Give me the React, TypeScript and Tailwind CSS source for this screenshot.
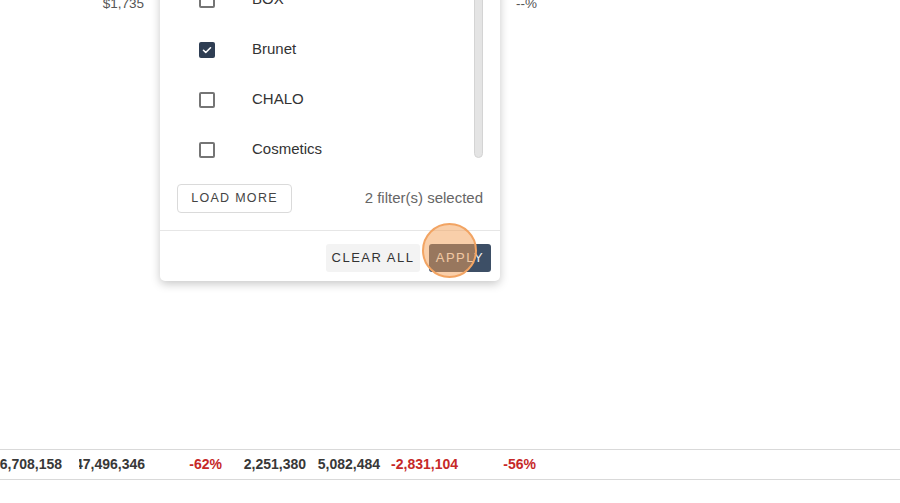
import React from "react"

const items = [
  { label: "BOX", checked: false },
  { label: "Brunet", checked: true },
  { label: "CHALO", checked: false },
  { label: "Cosmetics", checked: false },
]

const totals = [
  { value: "376,708,158", w: "w-[79px]", pr: "pr-[17px]", red: false },
  { value: "$47,496,346", w: "w-[70px]", pr: "pr-[4px]", red: false },
  { value: "-62%", w: "w-[77px]", pr: "pr-[4px]", red: true },
  { value: "2,251,380", w: "w-[84px]", pr: "pr-[4px]", red: false },
  { value: "5,082,484", w: "w-[74px]", pr: "pr-[4px]", red: false },
  { value: "-2,831,104", w: "w-[78px]", pr: "pr-[4px]", red: true },
  { value: "-56%", w: "w-[78px]", pr: "pr-[4px]", red: true },
]

const Checkbox = ({ checked }: { checked: boolean }) =>
  checked ? (
    <span className="flex h-[16px] w-[16px] items-center justify-center rounded-[2px] bg-[#2f3e53]">
      <svg width="12" height="12" viewBox="0 0 24 24" fill="none" stroke="white" strokeWidth="3.2" strokeLinecap="round" strokeLinejoin="round">
        <path d="M5 12.5l4.5 4.5L19 7.5" />
      </svg>
    </span>
  ) : (
    <span className="block h-[16px] w-[16px] rounded-[2px] border-2 border-[#757575] bg-white" />
  )

export default function App() {
  return (
    <div className="relative h-[503px] w-[900px] overflow-hidden bg-white font-['Liberation_Sans',Arial,sans-serif]">
      <div className="-mt-[5px] flex h-[18px] items-center text-[13.5px] text-[#555]">
        <span className="w-[144px] text-right">$1,735</span>
        <span className="ml-[372px]">--%</span>
      </div>

      <div className="mt-[436px] flex h-[31px] items-center border-y border-[#d9d9d9] text-[14px] font-semibold">
        {totals.map((t) => (
          <div key={t.value} className={`${t.w} ${t.pr} overflow-hidden whitespace-nowrap`}>
            <div className={`flex justify-end ${t.red ? "text-[#c62828]" : "text-[#383838]"}`}>{t.value}</div>
          </div>
        ))}
      </div>

      <div className="absolute left-[160px] top-[-26px] w-[340px] rounded-b-[5px] bg-white shadow-[0_3px_10px_rgba(0,0,0,0.22)]">
        <div className="flex h-[188px] overflow-hidden">
          <div className="flex-1">
            {items.map((it) => (
              <div key={it.label} className="flex h-[50px] items-center pl-[39px] pt-[1px]">
                <Checkbox checked={it.checked} />
                <span className="ml-[37px] text-[15px] text-[#333]">{it.label}</span>
              </div>
            ))}
          </div>
          <div className="mr-[17px] h-[184px] w-[9px] rounded-b-full border border-[#d4d4d4] bg-[#e4e4e4]" />
        </div>

        <div className="flex items-center justify-between px-[17px] pb-[17px] pt-[22px]">
          <button className="h-[29px] w-[115px] rounded-[4px] border border-[#dadada] text-[12.5px] tracking-[1.3px] text-[#444]">
            LOAD MORE
          </button>
          <span className="text-[15px] text-[#666]">2 filter(s) selected</span>
        </div>

        <div className="flex justify-end gap-[9px] border-t border-[#e6e6e6] px-[9px] pb-[9px] pt-[13px]">
          <button className="h-[28px] w-[94px] rounded-[3px] bg-[#f3f3f3] text-[13px] tracking-[1.5px] text-[#333]">
            CLEAR ALL
          </button>
          <button className="h-[28px] w-[62px] rounded-[3px] bg-[#3d4f66] text-[13px] tracking-[1.5px] text-[#f0f0f0]">
            APPLY
          </button>
        </div>
      </div>

      <div className="pointer-events-none absolute left-[422px] top-[223px] h-[55px] w-[55px] rounded-full border-2 border-[#f2a463] bg-[rgba(243,160,85,0.5)]" />
    </div>
  )
}
